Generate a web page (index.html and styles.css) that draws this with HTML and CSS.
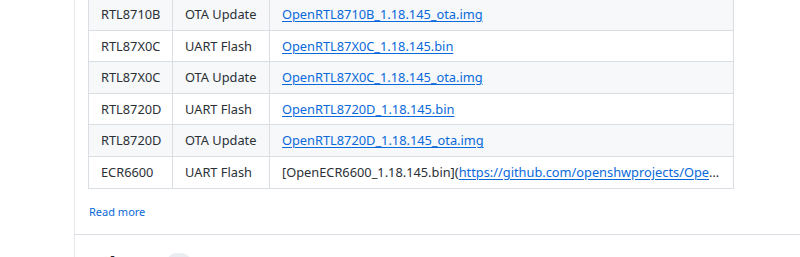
FILE: index.html
```html
<!DOCTYPE html>
<html lang="en">
<head>
<meta charset="utf-8">
<title>Release</title>
<link rel="stylesheet" href="styles.css">
</head>
<body>
<div class="box">
  <div class="box-body">
    <table class="md-table">
      <colgroup><col class="c1"><col class="c2"><col class="c3"></colgroup>
      <tbody>
        <tr class="alt"><td>RTL8710B</td><td>OTA Update</td><td class="cut"><a href="#">OpenRTL8710B_1.18.145_ota.img</a></td></tr>
        <tr><td>RTL87X0C</td><td>UART Flash</td><td class="cut"><a href="#">OpenRTL87X0C_1.18.145.bin</a></td></tr>
        <tr class="alt"><td>RTL87X0C</td><td>OTA Update</td><td class="cut"><a href="#">OpenRTL87X0C_1.18.145_ota.img</a></td></tr>
        <tr><td>RTL8720D</td><td>UART Flash</td><td class="cut"><a href="#">OpenRTL8720D_1.18.145.bin</a></td></tr>
        <tr class="alt"><td>RTL8720D</td><td>OTA Update</td><td class="cut"><a href="#">OpenRTL8720D_1.18.145_ota.img</a></td></tr>
        <tr><td>ECR6600</td><td>UART Flash</td><td class="cut">[OpenECR6600_1.18.145.bin](<a href="#">https://github.com/openshwprojects/OpenBK7231T_App/releases/download/1.18.145/OpenECR6600_1.18.145.bin</a>)</td></tr>
      </tbody>
    </table>
    <a class="read-more" href="#">Read more</a>
  </div>
  <div class="box-footer">
    <div class="assets">
      <h3 class="assets-title">Assets</h3>
      <span class="counter">2</span>
    </div>
  </div>
</div>
</body>
</html>
```

FILE: styles.css
```css
html, body {
  margin: 0;
  padding: 0;
  background: #ffffff;
}
body {
  width: 800px;
  height: 257px;
  overflow: hidden;
  font-family: "Noto Sans", "Open Sans", "Liberation Sans", sans-serif;
  color: #1f2328;
}
.box {
  margin-left: 74px;
  border-left: 1px solid #e3e6ea;
  width: 760px;
}
.box-body {
  padding: 0 0 13px 13px;
}
.md-table {
  border-collapse: collapse;
  table-layout: fixed;
  width: 645px;
  margin-top: -2px;
  font-size: 12.8px;
}
.md-table .c1 { width: 84px; }
.md-table .c2 { width: 97px; }
.md-table .c3 { width: 464px; }
.md-table td {
  border: 1px solid #d8dee4;
  padding: 5px 11px 5px 12px;
  line-height: 20.6px;
  white-space: nowrap;
  color: #2b3036;
}
.md-table td.cut {
  overflow: hidden;
  text-overflow: ellipsis;
}
.md-table tr.alt td {
  background: #f6f8fa;
}
.md-table a {
  color: #0969da;
  text-decoration: underline;
  text-underline-offset: 2px;
}
.read-more {
  display: block;
  margin-top: 14px;
  margin-left: 1px;
  font-size: 11px;
  line-height: 18px;
  color: #0969da;
  text-decoration: none;
}
.box-footer {
  border-top: 1px solid #d8dee4;
  padding: 15px 0 0 32px;
}
.assets {
  display: flex;
  align-items: center;
  gap: 8px;
}
.assets-title {
  margin: 0;
  font-size: 16px;
  font-weight: 700;
  line-height: 24px;
  color: #1f2328;
}
.counter {
  display: inline-block;
  min-width: 24px;
  padding: 0 6px;
  box-sizing: border-box;
  border-radius: 10px;
  background: #eaeef2;
  font-size: 12px;
  line-height: 18px;
  text-align: center;
  color: #1f2328;
}
```
